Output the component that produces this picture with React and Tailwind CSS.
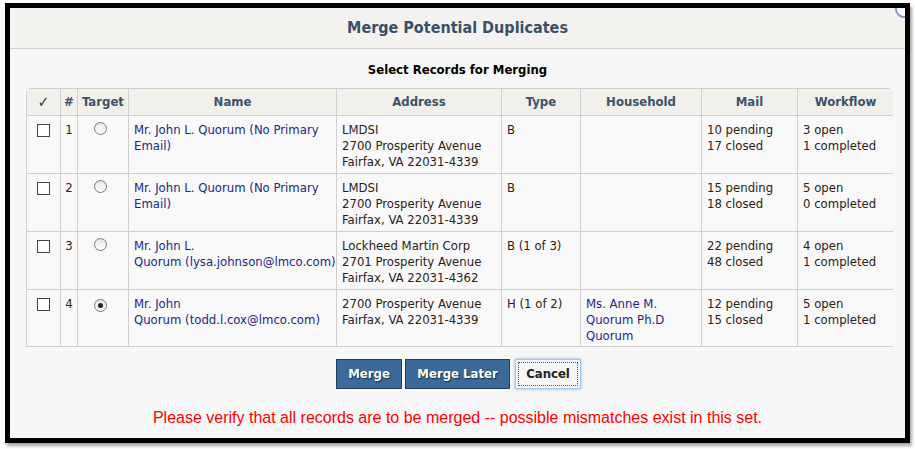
import React from 'react';

const rows = [
  {
    n: 1,
    name: ['Mr. John L. Quorum (No Primary', 'Email)'],
    address: ['LMDSI', '2700 Prosperity Avenue', 'Fairfax, VA 22031-4339'],
    type: 'B',
    household: [],
    mail: ['10 pending', '17 closed'],
    workflow: ['3 open', '1 completed'],
    h: 'h-[58px]',
  },
  {
    n: 2,
    name: ['Mr. John L. Quorum (No Primary', 'Email)'],
    address: ['LMDSI', '2700 Prosperity Avenue', 'Fairfax, VA 22031-4339'],
    type: 'B',
    household: [],
    mail: ['15 pending', '18 closed'],
    workflow: ['5 open', '0 completed'],
    h: 'h-[58px]',
  },
  {
    n: 3,
    name: ['Mr. John L.', 'Quorum (lysa.johnson@lmco.com)'],
    address: ['Lockheed Martin Corp', '2701 Prosperity Avenue', 'Fairfax, VA 22031-4362'],
    type: 'B (1 of 3)',
    household: [],
    mail: ['22 pending', '48 closed'],
    workflow: ['4 open', '1 completed'],
    h: 'h-[58px]',
  },
  {
    n: 4,
    name: ['Mr. John', 'Quorum (todd.l.cox@lmco.com)'],
    address: ['2700 Prosperity Avenue', 'Fairfax, VA 22031-4339'],
    type: 'H (1 of 2)',
    household: ['Ms. Anne M.', 'Quorum Ph.D', 'Quorum'],
    mail: ['12 pending', '15 closed'],
    workflow: ['5 open', '1 completed'],
    selected: true,
    h: 'h-[57px]',
  },
];

const Lines = ({ lines, className = '' }) => (
  <div className={className}>
    {lines.map((l, i) => (
      <div key={i}>{l}</div>
    ))}
  </div>
);

const Checkbox = () => (
  <span className="inline-block w-[13px] h-[13px] border border-[#444] bg-white" />
);

const Radio = ({ checked }) => (
  <span className="inline-flex items-center justify-center w-[13px] h-[13px] rounded-full border border-[#7a7a7a] bg-gradient-to-b from-[#e6e6e6] to-white">
    {checked && <span className="w-[5px] h-[5px] rounded-full bg-[#222]" />}
  </span>
);

const th = 'border border-[#cfcfcf] font-bold text-[#3d5169] text-center align-middle';
const td = 'border border-[#cfcfcf] align-top pt-[6px]';

export default function App() {
  return (
    <div
      className="w-[915px] h-[449px] bg-white overflow-hidden pt-[3px] pl-[5px]"
      style={{ fontFamily: "Tahoma, 'DejaVu Sans Condensed', 'DejaVu Sans', sans-serif" }}
    >
      <div className="w-[905px] h-[440px] border-[5px] border-black shadow-[2px_3px_3px_rgba(0,0,0,0.35)] bg-[#f8f8f8] flex flex-col relative overflow-hidden">
        {/* close button, mostly hidden behind the frame */}
        <div className="absolute -top-[8px] -right-[8px] w-[18px] h-[18px] rounded-full border-2 border-[#7f9aba] bg-white" />

        {/* title */}
        <div className="h-[41px] shrink-0 bg-[#f4f3ef] border-b border-[#cfcfcf] flex items-center justify-center">
          <span className="text-[16px] font-bold text-[#3a5068] mt-[-1px]">Merge Potential Duplicates</span>
        </div>

        <div className="text-center font-bold text-[13px] text-black mt-[13px] leading-[16px]">
          Select Records for Merging
        </div>

        {/* table */}
        <div className="ml-[16px] mt-[10px] w-[867px] rounded-t-[5px] overflow-hidden">
          <table className="w-[867px] table-fixed border-collapse text-[13px] leading-[16px] text-[#2a2118]">
            <colgroup>
              <col className="w-[34px]" />
              <col className="w-[17px]" />
              <col className="w-[51px]" />
              <col className="w-[208px]" />
              <col className="w-[165px]" />
              <col className="w-[79px]" />
              <col className="w-[121px]" />
              <col className="w-[96px]" />
              <col className="w-[96px]" />
            </colgroup>
            <thead>
              <tr className="h-[27px] bg-[#f1f0ea]">
                <th className={`${th} font-normal text-[#333] text-[15px]`}>✓</th>
                <th className={th}>#</th>
                <th className={th}>Target</th>
                <th className={th}>Name</th>
                <th className={th}>Address</th>
                <th className={th}>Type</th>
                <th className={th}>Household</th>
                <th className={th}>Mail</th>
                <th className={th}>Workflow</th>
              </tr>
            </thead>
            <tbody>
              {rows.map((r) => (
                <tr key={r.n} className={`${r.h} bg-[#f9f9f9]`}>
                  <td className={`${td} text-center pt-[8px]`}>
                    <Checkbox />
                  </td>
                  <td className={`${td} text-center`}>{r.n}</td>
                  <td className={`${td} text-center pt-[5px] pr-[5px]`}>
                    <Radio checked={r.selected} />
                  </td>
                  <td className={`${td} px-[5px]`}>
                    <Lines lines={r.name} className="text-[#24248a] whitespace-nowrap" />
                  </td>
                  <td className={`${td} px-[5px]`}>
                    <Lines lines={r.address} className="whitespace-nowrap" />
                  </td>
                  <td className={`${td} px-[5px]`}>{r.type}</td>
                  <td className={`${td} px-[5px]`}>
                    <Lines lines={r.household} className="text-[#24248a]" />
                  </td>
                  <td className={`${td} px-[5px]`}>
                    <Lines lines={r.mail} />
                  </td>
                  <td className={`${td} px-[5px]`}>
                    <Lines lines={r.workflow} />
                  </td>
                </tr>
              ))}
            </tbody>
          </table>
        </div>

        {/* buttons */}
        <div className="flex justify-center items-center mt-[12px] pl-[2px]">
          <button className="h-[30px] w-[66px] bg-[#3a6a9a] border border-[#1e3f60] text-white font-bold text-[13px] [text-shadow:1px_1px_1px_rgba(0,0,0,0.6)]">
            Merge
          </button>
          <button className="ml-[3px] h-[30px] w-[105px] bg-[#3a6a9a] border border-[#1e3f60] text-white font-bold text-[13px] [text-shadow:1px_1px_1px_rgba(0,0,0,0.6)]">
            Merge Later
          </button>
          <button className="ml-[5px] h-[30px] w-[66px] bg-[#f6f6f6] border border-[#a9c8e6] shadow-[0_0_3px_rgba(90,150,210,0.7)] text-[#222] font-bold text-[13px] flex items-center justify-center p-[2px]">
            <span className="w-full h-full flex items-center justify-center border border-dotted border-[#555]">Cancel</span>
          </button>
        </div>

        <div
          className="text-center text-[16px] text-[#ff0000] mt-[19px] leading-[20px]"
          style={{ fontFamily: "'Liberation Sans', Arial, sans-serif" }}
        >
          Please verify that all records are to be merged -- possible mismatches exist in this set.
        </div>
        <div className="flex-1 bg-[#f7f7fc] mt-[4px]" />
      </div>
    </div>
  );
}
